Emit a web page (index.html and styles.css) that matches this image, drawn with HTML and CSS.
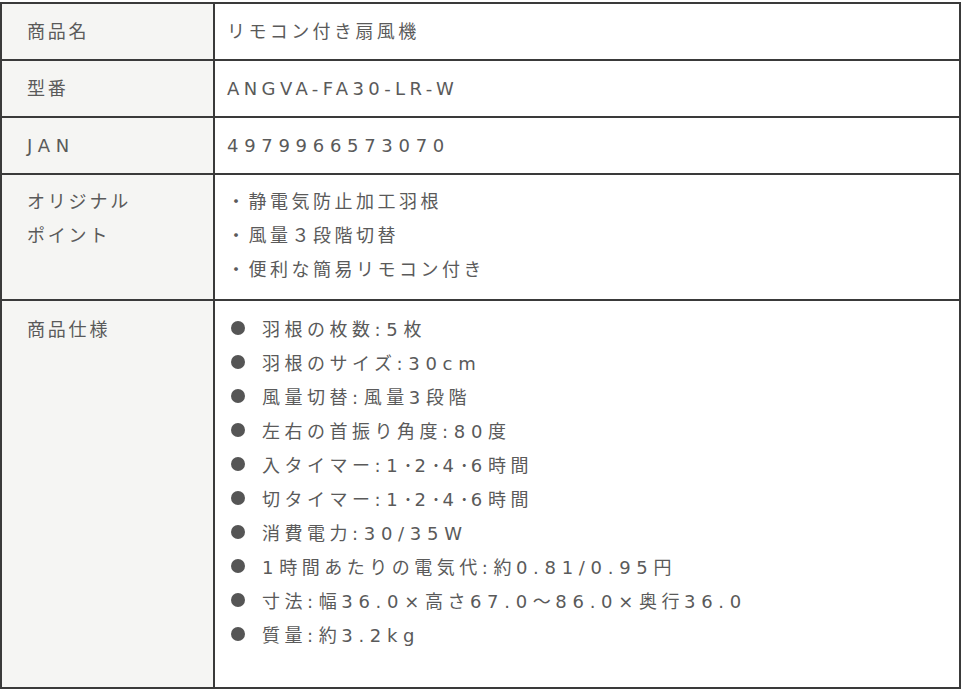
FILE: index.html
```html
<!DOCTYPE html>
<html lang="ja">
<head>
<meta charset="utf-8">
<link rel="stylesheet" href="styles.css">
</head>
<body>
<table class="spec">
  <tr class="row-short">
    <th>商品名</th>
    <td>リモコン付き扇風機</td>
  </tr>
  <tr class="row-short">
    <th>型番</th>
    <td><span class="model">ANGVA-FA30-LR-W</span></td>
  </tr>
  <tr class="row-short">
    <th><span class="en">JAN</span></th>
    <td><span class="en">4979966573070</span></td>
  </tr>
  <tr class="row-points">
    <th>オリジナル<br>ポイント</th>
    <td>
      <ul class="points">
        <li>・静電気防止加工羽根</li>
        <li>・風量３段階切替</li>
        <li>・便利な簡易リモコン付き</li>
      </ul>
    </td>
  </tr>
  <tr class="row-spec">
    <th>商品仕様</th>
    <td>
      <ul class="bullets">
        <li><span>羽根の枚数<span class="en">:5</span>枚</span></li>
        <li><span>羽根のサイズ<span class="en">:30cm</span></span></li>
        <li><span>風量切替<span class="en">:</span>風量<span class="en">3</span>段階</span></li>
        <li><span>左右の首振り角度<span class="en">:80</span>度</span></li>
        <li><span>入タイマー<span class="en">:1<span class="dot">･</span>2<span class="dot">･</span>4<span class="dot">･</span>6</span>時間</span></li>
        <li><span>切タイマー<span class="en">:1<span class="dot">･</span>2<span class="dot">･</span>4<span class="dot">･</span>6</span>時間</span></li>
        <li><span>消費電力<span class="en">:30/35W</span></span></li>
        <li><span><span class="en">1</span>時間あたりの電気代<span class="en">:</span>約<span class="en">0.81/0.95</span>円</span></li>
        <li><span>寸法<span class="en">:</span>幅<span class="en">36.0×</span>高さ<span class="en">67.0</span>～<span class="en">86.0×</span>奥行<span class="en">36.0</span></span></li>
        <li><span>質量<span class="en">:</span>約<span class="en">3.2kg</span></span></li>
      </ul>
    </td>
  </tr>
</table>
</body>
</html>
```

FILE: styles.css
```css
html, body {
  margin: 0;
  padding: 0;
  background: #ffffff;
}

body {
  padding-top: 2px;
  font-family: "Noto Sans CJK JP", "Noto Sans", sans-serif;
  font-size: 18px;
  color: #5a5a5a;
  letter-spacing: 2.8px;
}

.spec {
  border-collapse: collapse;
  width: 961px;
  table-layout: fixed;
}

.spec th,
.spec td {
  border: 2px solid #3a3a3a;
  text-align: left;
  vertical-align: top;
  font-weight: normal;
  line-height: 34px;
}

.spec th {
  width: 186px;
  background: #f5f5f3;
  padding: 12px 0 0 25px;
}

.spec td {
  padding: 12px 0 0 12px;
  background: #ffffff;
  letter-spacing: 3.4px;
}

.en {
  font-family: "DejaVu Sans", "Noto Sans CJK JP", sans-serif;
  letter-spacing: 5.7px;
  line-height: 1;
}

.model {
  font-family: "DejaVu Sans", "Noto Sans CJK JP", sans-serif;
  letter-spacing: 4.4px;
  line-height: 1;
}

.dot {
  font-family: "Noto Sans CJK JP", sans-serif;
  letter-spacing: 2px;
}

.row-short th,
.row-short td {
  height: 46px;
  padding-top: 9px;
  padding-bottom: 0;
}

.row-points th,
.row-points td {
  padding-top: 8px;
  padding-bottom: 14px;
}

.row-points td {
  letter-spacing: 3.5px;
}

.row-spec th,
.row-spec td {
  padding-top: 10px;
  padding-bottom: 36px;
}

.points,
.bullets {
  list-style: none;
  margin: 0;
  padding: 0;
}

.bullets li {
  display: flex;
  align-items: center;
  letter-spacing: 4.5px;
}

.bullets li::before {
  content: "";
  flex: none;
  width: 14px;
  height: 14px;
  border-radius: 50%;
  background: #555555;
  margin: 0 17px 0 4px;
}
```
